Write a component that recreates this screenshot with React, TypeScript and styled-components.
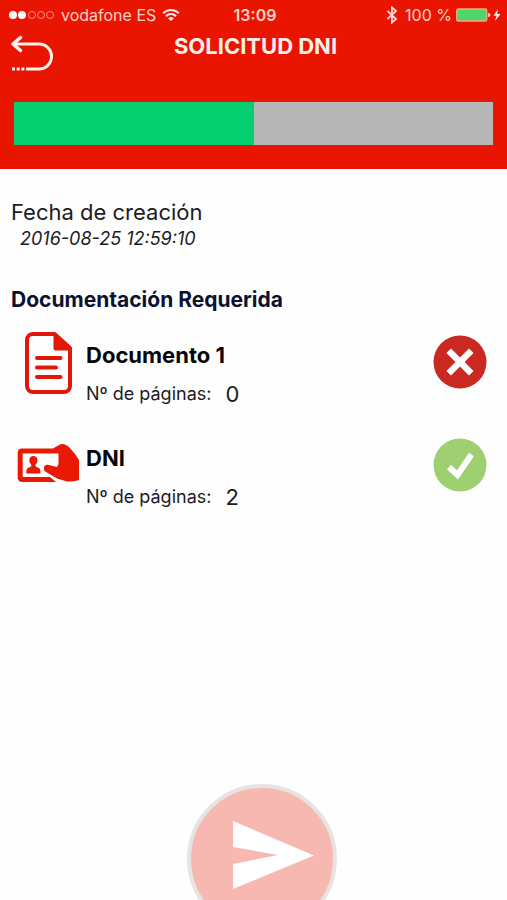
import React from "react";
import styled, { createGlobalStyle } from "styled-components";

const GlobalStyle = createGlobalStyle`
  * { box-sizing: border-box; }
  body { margin: 0; background: #fefefe; }
  button { font: inherit; }
`;

const Screen = styled.div`
  display: flex;
  flex-direction: column;
  height: 100vh;
  overflow: hidden;
  background: #fefefe;
  color: #1c1c1e;
  font-family: Inter, "Liberation Sans", sans-serif;
`;

const Header = styled.header`
  flex: none;
  background: #ea1500;
  color: #fff;
  padding-bottom: 24px;
`;

const StatusBar = styled.div`
  display: grid;
  grid-template-columns: 1fr auto 1fr;
  align-items: center;
  height: 30px;
  padding: 0 6px 0 9px;
  font-size: 16px;
  line-height: 20px;
  color: #ffd0c8;
`;

const StatusGroup = styled.div<{ $end?: boolean }>`
  display: flex;
  align-items: center;
  justify-content: ${(p) => (p.$end ? "flex-end" : "flex-start")};
  gap: ${(p) => (p.$end ? 4 : 6)}px;
  white-space: nowrap;
`;

const Clock = styled.time`
  font-weight: 600;
`;

const NavBar = styled.div`
  display: grid;
  grid-template-columns: 48px 1fr 48px;
  align-items: start;
  height: 72px;
  padding: 0 4px 0 8px;
`;

const IconButton = styled.button`
  display: flex;
  justify-content: center;
  padding: 4px 0;
  border: 0;
  background: none;
  color: inherit;
  cursor: pointer;
`;

const Title = styled.h1`
  margin: 0;
  padding-top: 2px;
  text-align: center;
  font-size: 22px;
  line-height: 28px;
  font-weight: 700;
  color: #ffefec;
`;

const ProgressRow = styled.div`
  padding: 0 14px;
`;

const Progress = styled.progress`
  appearance: none;
  display: block;
  width: 100%;
  height: 43px;
  border: 0;
  background: #b7b7b7;
  &::-webkit-progress-bar { background: #b7b7b7; }
  &::-webkit-progress-value { background: #03cf6e; }
`;

const Main = styled.main`
  flex: 1;
  min-height: 0;
  padding: 28px 20px 0 11px;
`;

const Created = styled.dl`
  margin: 0;
`;

const CreatedLabel = styled.dt`
  font-size: 22px;
  line-height: 30px;
`;

const CreatedValue = styled.dd`
  margin: 0 0 0 9px;
  font-size: 18px;
  line-height: 24px;
  font-style: italic;
`;

const SectionTitle = styled.h2`
  margin: 35px 0 0;
  font-size: 21px;
  line-height: 28px;
  font-weight: 700;
  color: #0b1230;
`;

const DocumentList = styled.ul`
  margin: 0;
  padding: 15px 0 0;
  list-style: none;
`;

const DocumentRow = styled.li`
  display: grid;
  grid-template-columns: 75px 1fr auto;
  height: 103px;
`;

const DocumentIcon = styled.div`
  padding: 3px 0 0 6px;
`;

const DocumentName = styled.h3`
  margin: 0;
  padding-top: 11px;
  font-size: 22px;
  line-height: 30px;
  font-weight: 700;
  color: #050505;
`;

const Pages = styled.p`
  display: flex;
  align-items: center;
  gap: 14px;
  margin: 8px 0 0;
  font-size: 18px;
  line-height: 32px;
`;

const PageCount = styled.span`
  font-size: 22px;
`;

const StatusBadge = styled.div`
  padding-top: 6px;
`;

const Footer = styled.footer`
  display: flex;
  flex: none;
  justify-content: center;
  height: 116px;
  padding-left: 16px;
`;

const SendButton = styled.button`
  display: flex;
  flex: none;
  align-items: center;
  justify-content: center;
  width: 150px;
  height: 150px;
  padding: 0;
  border: 4px solid #e6e3e0;
  border-radius: 50%;
  background: #f7b8b2;
  cursor: pointer;
`;

const SignalIcon = () => (
  <svg width="46" height="12" viewBox="0 0 46 12" aria-hidden="true">
    {[4, 13, 23, 32, 41].map((x, i) => (
      <circle
        key={x}
        cx={x}
        cy="6"
        r={i < 2 ? 4 : 3.5}
        fill={i < 2 ? "#fff" : "none"}
        stroke={i < 2 ? "none" : "#ff8b7d"}
      />
    ))}
  </svg>
);

const WifiIcon = () => (
  <svg width="18" height="14" viewBox="0 0 18 14" fill="none" stroke="#ffece9" strokeWidth="2" aria-hidden="true">
    <path d="M1.2 5.2a11 11 0 0 1 15.6 0M4 8.2a7 7 0 0 1 10 0" />
    <path d="M9 13 6.2 10.4a4 4 0 0 1 5.6 0Z" fill="#ffece9" stroke="none" />
  </svg>
);

const BluetoothIcon = () => (
  <svg width="15" height="18" viewBox="0 0 15 18" fill="none" stroke="#ffd8d2" strokeWidth="1.8" aria-hidden="true">
    <path d="M1.5 5 10 13 6 16.600V1.400L10 5l-8.500 8" />
  </svg>
);

const BatteryIcon = () => (
  <svg width="45" height="16" viewBox="0 0 45 16" aria-hidden="true">
    <rect x="0.7" y="2" width="30" height="12" rx="1.5" fill="#4fd765" stroke="#ffa08f" strokeWidth="1.4" />
    <path d="M32 6q2.5 0 2.5 2t-2.5 2z" fill="#ffd0c8" />
    <path d="M42 2 37.5 8.7h3L39 14l5.500-7h-3.200z" fill="#ffebe8" />
  </svg>
);

const BackIcon = () => (
  <svg width="44" height="38" viewBox="0 0 44 38" fill="none" stroke="#fff1ee" strokeWidth="3" aria-hidden="true">
    <path d="M4 10h25a12.200 12.200 0 0 1 0 25H19" />
    <path d="m10.500 3.500-7.500 6.500 7.500 6.500" strokeWidth="3.500" strokeLinecap="round" strokeLinejoin="round" />
    <path d="M2 35h17" strokeDasharray="3 1.700" />
  </svg>
);

const FileIcon = () => (
  <svg width="62" height="62" viewBox="0 0 62 62" fill="none" stroke="#e31708" strokeWidth="4" aria-hidden="true">
    <path d="M16 2h21.500L53 16v38a6 6 0 0 1-6 6H16a6 6 0 0 1-6-6V8a6 6 0 0 1 6-6Z" strokeLinejoin="round" />
    <path d="M36.500 2v14.500a2 2 0 0 0 2 2H54V15L39 1z" fill="#e31708" stroke="none" />
    <path d="M20 26h23.500M20 35.500h19M20 45h23.500" strokeLinecap="round" />
  </svg>
);

const CardIcon = () => (
  <svg width="62" height="62" viewBox="0 0 62 62" aria-hidden="true">
    <path
      d="M5 13.500h31L42 10q3.500-1.800 7 0l3 2 6 7 4 6v20q-6 2-12 1.500l-10-3L29 37q-3-2-2-5t5-2l8 2 1.500-3V18.500H5.700V42H33l6 5H5a4.300 4.300 0 0 1-4.300-4.300v-25A4.300 4.300 0 0 1 5 13.500Z"
      fill="#e91905"
      fillRule="evenodd"
    />
    <path
      d="M16.300 21c2.700 0 4.200 1.800 4.200 4.200 0 1.800-.9 3.300-1.900 4.300v2l3.400 1.600q1.500.8 1.500 5.400H9.300q0-4.600 1.500-5.400l3.400-1.600v-2c-1-1-1.900-2.500-1.900-4.300 0-2.400 1.500-4.200 4-4.200Z"
      fill="#e91905"
    />
  </svg>
);

const CrossBadge = () => (
  <svg width="54" height="54" viewBox="0 0 54 54" role="img" aria-label="Pendiente">
    <circle cx="27" cy="27" r="26.500" fill="#ca2922" />
    <path d="m18 18 18 18m0-18L18 36" stroke="#fff" strokeWidth="6.500" strokeLinecap="square" />
  </svg>
);

const CheckBadge = () => (
  <svg width="54" height="54" viewBox="0 0 54 54" role="img" aria-label="Completado">
    <circle cx="27" cy="27" r="26.500" fill="#9ed071" />
    <path d="m16 29 8.500 8L38.500 16.500" fill="none" stroke="#fff" strokeWidth="6" />
  </svg>
);

const SendIcon = () => (
  <svg width="142" height="142" viewBox="0 0 142 142" aria-hidden="true">
    <path d="M42 33 123 67.500 42 101V76l45-9-45-8z" fill="#fff" />
  </svg>
);

const documents = [
  { name: "Documento 1", pages: 0, icon: <FileIcon />, done: false },
  { name: "DNI", pages: 2, icon: <CardIcon />, done: true },
];

export default function App() {
  return (
    <Screen>
      <GlobalStyle />
      <Header>
        <StatusBar>
          <StatusGroup>
            <SignalIcon />
            <span>vodafone ES</span>
            <WifiIcon />
          </StatusGroup>
          <Clock>13:09</Clock>
          <StatusGroup $end>
            <BluetoothIcon />
            <span>100 %</span>
            <BatteryIcon />
          </StatusGroup>
        </StatusBar>
        <NavBar>
          <IconButton type="button" aria-label="Volver">
            <BackIcon />
          </IconButton>
          <Title>SOLICITUD DNI</Title>
        </NavBar>
        <ProgressRow>
          <Progress value={50} max={100} aria-label="Progreso de la solicitud" />
        </ProgressRow>
      </Header>
      <Main>
        <Created>
          <CreatedLabel>Fecha de creación</CreatedLabel>
          <CreatedValue>2016-08-25 12:59:10</CreatedValue>
        </Created>
        <SectionTitle>Documentación Requerida</SectionTitle>
        <DocumentList>
          {documents.map((doc) => (
            <DocumentRow key={doc.name}>
              <DocumentIcon>{doc.icon}</DocumentIcon>
              <div>
                <DocumentName>{doc.name}</DocumentName>
                <Pages>
                  Nº de páginas: <PageCount>{doc.pages}</PageCount>
                </Pages>
              </div>
              <StatusBadge>{doc.done ? <CheckBadge /> : <CrossBadge />}</StatusBadge>
            </DocumentRow>
          ))}
        </DocumentList>
      </Main>
      <Footer>
        <SendButton type="button" aria-label="Enviar">
          <SendIcon />
        </SendButton>
      </Footer>
    </Screen>
  );
}
